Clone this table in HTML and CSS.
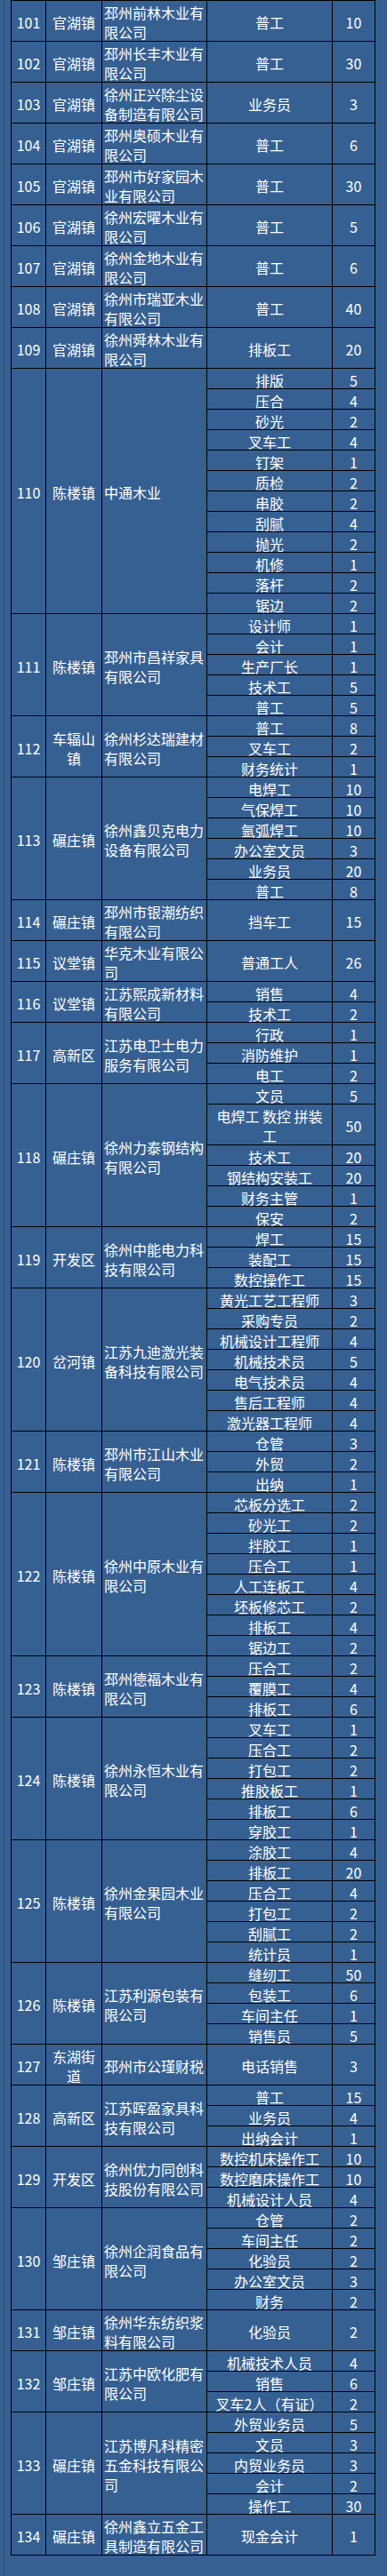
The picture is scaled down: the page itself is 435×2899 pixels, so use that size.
FILE: index.html
```html
<!DOCTYPE html>
<html lang="zh-CN">
<head>
<meta charset="utf-8">
<title>招聘岗位</title>
<link rel="stylesheet" href="styles.css">
</head>
<body>
<div class="page">
<div class="sheet">
<div class="n r2">101</div><div class="t r2">官湖镇</div><div class="c r2">邳州前林木业有限公司</div><div class="j r2">普工</div><div class="k r2">10</div>
<div class="n r2">102</div><div class="t r2">官湖镇</div><div class="c r2">邳州长丰木业有限公司</div><div class="j r2">普工</div><div class="k r2">30</div>
<div class="n r2">103</div><div class="t r2">官湖镇</div><div class="c r2">徐州正兴除尘设备制造有限公司</div><div class="j r2">业务员</div><div class="k r2">3</div>
<div class="n r2">104</div><div class="t r2">官湖镇</div><div class="c r2">邳州奥硕木业有限公司</div><div class="j r2">普工</div><div class="k r2">6</div>
<div class="n r2">105</div><div class="t r2">官湖镇</div><div class="c r2">邳州市好家园木业有限公司</div><div class="j r2">普工</div><div class="k r2">30</div>
<div class="n r2">106</div><div class="t r2">官湖镇</div><div class="c r2">徐州宏曜木业有限公司</div><div class="j r2">普工</div><div class="k r2">5</div>
<div class="n r2">107</div><div class="t r2">官湖镇</div><div class="c r2">徐州金地木业有限公司</div><div class="j r2">普工</div><div class="k r2">6</div>
<div class="n r2">108</div><div class="t r2">官湖镇</div><div class="c r2">徐州市瑞亚木业有限公司</div><div class="j r2">普工</div><div class="k r2">40</div>
<div class="n r2">109</div><div class="t r2">官湖镇</div><div class="c r2">徐州舜林木业有限公司</div><div class="j r2">排板工</div><div class="k r2">20</div>

<div class="n r12">110</div><div class="t r12">陈楼镇</div><div class="c r12">中通木业</div>
<div class="j">排版</div><div class="k">5</div>
<div class="j">压合</div><div class="k">4</div>
<div class="j">砂光</div><div class="k">2</div>
<div class="j">叉车工</div><div class="k">4</div>
<div class="j">钉架</div><div class="k">1</div>
<div class="j">质检</div><div class="k">2</div>
<div class="j">串胶</div><div class="k">2</div>
<div class="j">刮腻</div><div class="k">4</div>
<div class="j">抛光</div><div class="k">2</div>
<div class="j">机修</div><div class="k">1</div>
<div class="j">落杆</div><div class="k">2</div>
<div class="j">锯边</div><div class="k">2</div>

<div class="n r5">111</div><div class="t r5">陈楼镇</div><div class="c r5">邳州市昌祥家具有限公司</div>
<div class="j">设计师</div><div class="k">1</div>
<div class="j">会计</div><div class="k">1</div>
<div class="j">生产厂长</div><div class="k">1</div>
<div class="j">技术工</div><div class="k">5</div>
<div class="j">普工</div><div class="k">5</div>

<div class="n r3">112</div><div class="t r3">车辐山镇</div><div class="c r3">徐州杉达瑞建材有限公司</div>
<div class="j">普工</div><div class="k">8</div>
<div class="j">叉车工</div><div class="k">2</div>
<div class="j">财务统计</div><div class="k">1</div>

<div class="n r6">113</div><div class="t r6">碾庄镇</div><div class="c r6">徐州鑫贝克电力设备有限公司</div>
<div class="j">电焊工</div><div class="k">10</div>
<div class="j">气保焊工</div><div class="k">10</div>
<div class="j">氩弧焊工</div><div class="k">10</div>
<div class="j">办公室文员</div><div class="k">3</div>
<div class="j">业务员</div><div class="k">20</div>
<div class="j">普工</div><div class="k">8</div>

<div class="n r2">114</div><div class="t r2">碾庄镇</div><div class="c r2">邳州市银潮纺织有限公司</div><div class="j r2">挡车工</div><div class="k r2">15</div>
<div class="n r2">115</div><div class="t r2">议堂镇</div><div class="c r2">华克木业有限公司</div><div class="j r2">普通工人</div><div class="k r2">26</div>

<div class="n r2">116</div><div class="t r2">议堂镇</div><div class="c r2">江苏熙成新材料有限公司</div>
<div class="j">销售</div><div class="k">4</div>
<div class="j">技术工</div><div class="k">2</div>

<div class="n r3">117</div><div class="t r3">高新区</div><div class="c r3">江苏电卫士电力服务有限公司</div>
<div class="j">行政</div><div class="k">1</div>
<div class="j">消防维护</div><div class="k">1</div>
<div class="j">电工</div><div class="k">2</div>

<div class="n r7">118</div><div class="t r7">碾庄镇</div><div class="c r7">徐州力泰钢结构有限公司</div>
<div class="j">文员</div><div class="k">5</div>
<div class="j r2">电焊工 数控 拼装<br>工</div><div class="k r2">50</div>
<div class="j">技术工</div><div class="k">20</div>
<div class="j">钢结构安装工</div><div class="k">20</div>
<div class="j">财务主管</div><div class="k">1</div>
<div class="j">保安</div><div class="k">2</div>

<div class="n r3">119</div><div class="t r3">开发区</div><div class="c r3">徐州中能电力科技有限公司</div>
<div class="j">焊工</div><div class="k">15</div>
<div class="j">装配工</div><div class="k">15</div>
<div class="j">数控操作工</div><div class="k">15</div>

<div class="n r7">120</div><div class="t r7">岔河镇</div><div class="c r7">江苏九迪激光装备科技有限公司</div>
<div class="j">黄光工艺工程师</div><div class="k">3</div>
<div class="j">采购专员</div><div class="k">2</div>
<div class="j">机械设计工程师</div><div class="k">4</div>
<div class="j">机械技术员</div><div class="k">5</div>
<div class="j">电气技术员</div><div class="k">4</div>
<div class="j">售后工程师</div><div class="k">4</div>
<div class="j">激光器工程师</div><div class="k">4</div>

<div class="n r3">121</div><div class="t r3">陈楼镇</div><div class="c r3">邳州市江山木业有限公司</div>
<div class="j">仓管</div><div class="k">3</div>
<div class="j">外贸</div><div class="k">2</div>
<div class="j">出纳</div><div class="k">1</div>

<div class="n r8">122</div><div class="t r8">陈楼镇</div><div class="c r8">徐州中原木业有限公司</div>
<div class="j">芯板分选工</div><div class="k">2</div>
<div class="j">砂光工</div><div class="k">2</div>
<div class="j">拌胶工</div><div class="k">1</div>
<div class="j">压合工</div><div class="k">1</div>
<div class="j">人工连板工</div><div class="k">4</div>
<div class="j">坯板修芯工</div><div class="k">2</div>
<div class="j">排板工</div><div class="k">4</div>
<div class="j">锯边工</div><div class="k">2</div>

<div class="n r3">123</div><div class="t r3">陈楼镇</div><div class="c r3">邳州德福木业有限公司</div>
<div class="j">压合工</div><div class="k">2</div>
<div class="j">覆膜工</div><div class="k">4</div>
<div class="j">排板工</div><div class="k">6</div>

<div class="n r6">124</div><div class="t r6">陈楼镇</div><div class="c r6">徐州永恒木业有限公司</div>
<div class="j">叉车工</div><div class="k">1</div>
<div class="j">压合工</div><div class="k">2</div>
<div class="j">打包工</div><div class="k">2</div>
<div class="j">推胶板工</div><div class="k">1</div>
<div class="j">排板工</div><div class="k">6</div>
<div class="j">穿胶工</div><div class="k">1</div>

<div class="n r6">125</div><div class="t r6">陈楼镇</div><div class="c r6">徐州金果园木业有限公司</div>
<div class="j">涂胶工</div><div class="k">4</div>
<div class="j">排板工</div><div class="k">20</div>
<div class="j">压合工</div><div class="k">4</div>
<div class="j">打包工</div><div class="k">2</div>
<div class="j">刮腻工</div><div class="k">2</div>
<div class="j">统计员</div><div class="k">1</div>

<div class="n r4">126</div><div class="t r4">陈楼镇</div><div class="c r4">江苏利源包装有限公司</div>
<div class="j">缝纫工</div><div class="k">50</div>
<div class="j">包装工</div><div class="k">6</div>
<div class="j">车间主任</div><div class="k">1</div>
<div class="j">销售员</div><div class="k">5</div>

<div class="n r2">127</div><div class="t r2">东湖街道</div><div class="c r2">邳州市公瑾财税</div><div class="j r2">电话销售</div><div class="k r2">3</div>

<div class="n r3">128</div><div class="t r3">高新区</div><div class="c r3">江苏晖盈家具科技有限公司</div>
<div class="j">普工</div><div class="k">15</div>
<div class="j">业务员</div><div class="k">4</div>
<div class="j">出纳会计</div><div class="k">1</div>

<div class="n r3">129</div><div class="t r3">开发区</div><div class="c r3">徐州优力同创科技股份有限公司</div>
<div class="j">数控机床操作工</div><div class="k">10</div>
<div class="j">数控磨床操作工</div><div class="k">10</div>
<div class="j">机械设计人员</div><div class="k">4</div>

<div class="n r5">130</div><div class="t r5">邹庄镇</div><div class="c r5">徐州企润食品有限公司</div>
<div class="j">仓管</div><div class="k">2</div>
<div class="j">车间主任</div><div class="k">2</div>
<div class="j">化验员</div><div class="k">2</div>
<div class="j">办公室文员</div><div class="k">3</div>
<div class="j">财务</div><div class="k">2</div>

<div class="n r2">131</div><div class="t r2">邹庄镇</div><div class="c r2">徐州华东纺织浆料有限公司</div><div class="j r2">化验员</div><div class="k r2">2</div>

<div class="n r3">132</div><div class="t r3">邹庄镇</div><div class="c r3">江苏中欧化肥有限公司</div>
<div class="j">机械技术人员</div><div class="k">4</div>
<div class="j">销售</div><div class="k">6</div>
<div class="j">叉车2人（有证）</div><div class="k">2</div>

<div class="n r5">133</div><div class="t r5">碾庄镇</div><div class="c r5">江苏博凡科精密五金科技有限公司</div>
<div class="j">外贸业务员</div><div class="k">5</div>
<div class="j">文员</div><div class="k">3</div>
<div class="j">内贸业务员</div><div class="k">3</div>
<div class="j">会计</div><div class="k">2</div>
<div class="j">操作工</div><div class="k">30</div>

<div class="n r2">134</div><div class="t r2">碾庄镇</div><div class="c r2">徐州鑫立五金工具制造有限公司</div><div class="j r2">现金会计</div><div class="k r2">1</div>
</div>
</div>
</body>
</html>
```

FILE: styles.css
```css
html, body {
  margin: 0;
  padding: 0;
  background: #366092;
}

.page {
  min-height: 2899px;
  margin-left: 4px;
  padding-left: 7px;
  border-left: 1px solid #2a4d7a;
  box-sizing: border-box;
}

.sheet {
  display: grid;
  grid-template-columns: 38px 62px 117px 140px 47px;
  grid-auto-rows: 22px;
  gap: 1px;
  width: max-content;
  background: #000;
  border: 1px solid #000;
  font-family: "Noto Sans CJK SC", "Noto Sans", sans-serif;
  font-size: 16px;
  line-height: 22px;
  color: #fff;
}

.sheet > div {
  background: #366092;
  display: flex;
  align-items: center;
  justify-content: center;
  text-align: center;
  padding-top: 3px;
  box-sizing: border-box;
}

.n { grid-column: 1; }
.t { grid-column: 2; }
.j { grid-column: 4; }
.k { grid-column: 5; }

.sheet > .c {
  grid-column: 3;
  justify-content: flex-start;
  text-align: left;
  padding-left: 2px;
}

.r2 { grid-row: span 2; }
.r3 { grid-row: span 3; }
.r4 { grid-row: span 4; }
.r5 { grid-row: span 5; }
.r6 { grid-row: span 6; }
.r7 { grid-row: span 7; }
.r8 { grid-row: span 8; }
.r12 { grid-row: span 12; }
```
